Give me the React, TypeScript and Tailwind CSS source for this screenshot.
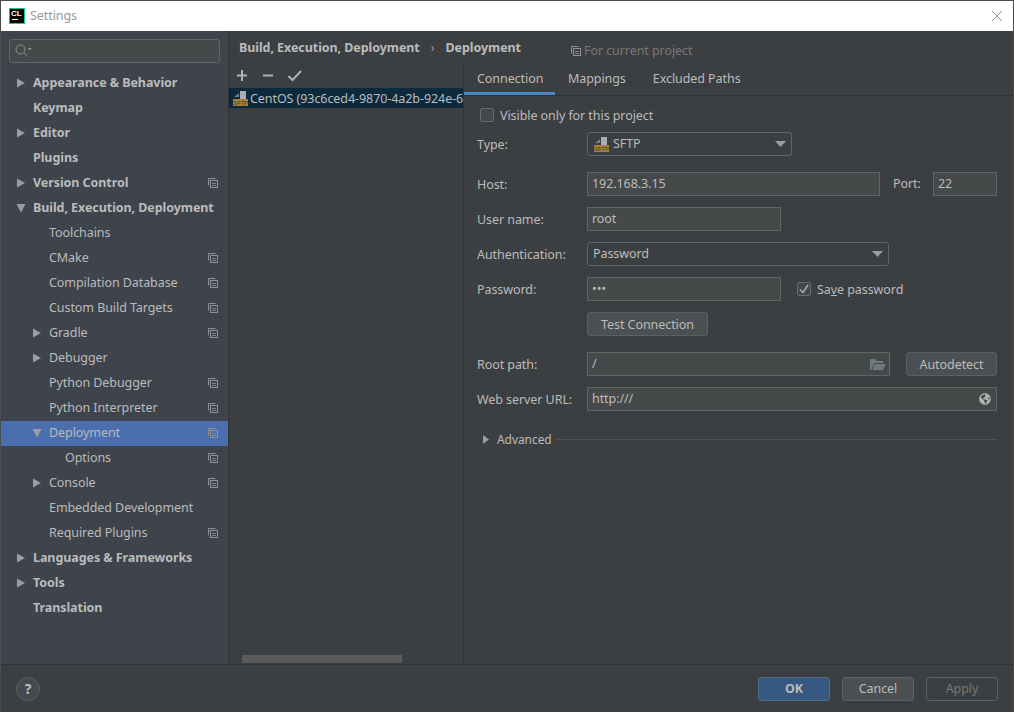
import { FaGlobeAmericas } from "react-icons/fa";

type NavItem = {
  label: string;
  level: 0 | 1 | 2;
  arrow?: "right" | "down";
  copy?: boolean;
  selected?: boolean;
};

const navItems: NavItem[] = [
  { label: "Appearance & Behavior", level: 0, arrow: "right" },
  { label: "Keymap", level: 0 },
  { label: "Editor", level: 0, arrow: "right" },
  { label: "Plugins", level: 0 },
  { label: "Version Control", level: 0, arrow: "right", copy: true },
  { label: "Build, Execution, Deployment", level: 0, arrow: "down" },
  { label: "Toolchains", level: 1 },
  { label: "CMake", level: 1, copy: true },
  { label: "Compilation Database", level: 1, copy: true },
  { label: "Custom Build Targets", level: 1, copy: true },
  { label: "Gradle", level: 1, arrow: "right", copy: true },
  { label: "Debugger", level: 1, arrow: "right" },
  { label: "Python Debugger", level: 1, copy: true },
  { label: "Python Interpreter", level: 1, copy: true },
  { label: "Deployment", level: 1, arrow: "down", copy: true, selected: true },
  { label: "Options", level: 2, copy: true },
  { label: "Console", level: 1, arrow: "right", copy: true },
  { label: "Embedded Development", level: 1 },
  { label: "Required Plugins", level: 1, copy: true },
  { label: "Languages & Frameworks", level: 0, arrow: "right" },
  { label: "Tools", level: 0, arrow: "right" },
  { label: "Translation", level: 0 },
];

function Arrow({ dir, className }: { dir: "right" | "down"; className?: string }) {
  return (
    <svg width="10" height="10" viewBox="0 0 10 10" className={className}>
      {dir === "right" ? (
        <polygon points="1,0.5 9,5 1,9.5" fill="#9a9da0" />
      ) : (
        <polygon points="0.5,1 9.5,1 5,9.5" fill="#9a9da0" />
      )}
    </svg>
  );
}

function CopyIcon() {
  return (
    <svg width="10" height="10" viewBox="0 0 10 10" fill="none" stroke="#8f9396">
      <path d="M7.5 0.5H0.5V7.5" />
      <rect x="2.5" y="2.5" width="7" height="7" />
      <path d="M4 5.5H8M4 7.5H8" strokeWidth="0.8" />
    </svg>
  );
}

function SftpIcon() {
  return (
    <svg width="16" height="16" viewBox="0 0 16 16" className="shrink-0">
      <polygon points="2,7 7,3 7,7" fill="#7d8185" />
      <rect x="8" y="1" width="6" height="8" fill="#a9adb0" />
      <rect x="1" y="9" width="15" height="7" fill="#a8822f" />
      <text x="8.5" y="15" textAnchor="middle" fontSize="6" fontFamily="Liberation Sans, sans-serif" fill="#3c3f41">
        SFTP
      </text>
    </svg>
  );
}

function Caret() {
  return (
    <svg width="11" height="6" viewBox="0 0 11 6">
      <polygon points="0,0 11,0 5.5,6" fill="#9a9da0" />
    </svg>
  );
}

function Field({ value, className, children }: { value: string; className: string; children?: React.ReactNode }) {
  return (
    <div className={`flex h-6 items-center justify-between border border-[#646464] bg-[#45494a] pl-[4px] pr-[3px] ${className}`}>
      <span className="pt-[1px]">{value}</span>
      {children}
    </div>
  );
}

function Combo({ className, children }: { className: string; children: React.ReactNode }) {
  return (
    <div className={`flex h-6 items-center justify-between rounded-[3px] border border-[#646464] bg-[#3c3f41] pl-[5px] pr-[5px] ${className}`}>
      <div className="flex items-center gap-1">{children}</div>
      <Caret />
    </div>
  );
}

function Label({ children, className = "w-[110px]" }: { children: React.ReactNode; className?: string }) {
  return <div className={`shrink-0 pt-[2px] ${className}`}>{children}</div>;
}

function Button({ children, className }: { children: React.ReactNode; className: string }) {
  return (
    <div className={`flex h-6 items-center justify-center rounded-[3px] border pt-[2px] ${className}`}>{children}</div>
  );
}

export default function App() {
  return (
    <div className="flex h-[712px] w-[1014px] flex-col overflow-hidden border-x border-t border-[#4b4b4b] bg-[#3c3f41] font-['Noto_Sans',sans-serif] text-[12.5px] leading-none tracking-[-0.07px] text-[#bbbbbb]">
      {/* title bar */}
      <div className="flex h-[30px] shrink-0 items-center bg-white pl-2 pr-[10px]">
        <div className="flex h-4 w-4 flex-col border border-[#10c98d] bg-black pl-px pt-px">
          <span className="font-['Liberation_Sans',sans-serif] text-[8px] font-bold leading-[8px] text-white">CL</span>
          <span className="ml-px mt-px h-px w-[6px] bg-white" />
        </div>
        <span className="ml-[5px] text-[#9a9a9a]">Settings</span>
        <svg width="12" height="12" viewBox="0 0 12 12" className="ml-auto" stroke="#8c8c8c">
          <path d="M1 1L11 11M11 1L1 11" />
        </svg>
      </div>

      <div className="flex min-h-0 flex-1">
        {/* sidebar */}
        <aside className="flex w-[228px] shrink-0 flex-col border-r border-[#323232] bg-[#3e434c]">
          <div className="mx-2 mt-2 flex h-6 items-center rounded-[3px] border border-[#646464] bg-[#45494a] pl-[5px]">
            <svg width="17" height="14" viewBox="0 0 17 14" fill="none" stroke="#8a8e91">
              <circle cx="5.5" cy="5.5" r="4.5" />
              <path d="M9 9L12.5 12.5" />
              <polygon points="12.5,4 17,4 14.75,6.5" fill="#8a8e91" stroke="none" />
            </svg>
          </div>
          <nav className="mt-2 flex flex-col">
            {navItems.map((item) => (
              <div
                key={item.label}
                className={`relative flex h-[25px] shrink-0 items-center pr-[10px] ${item.selected ? "bg-[#4b6eaf]" : ""} ${item.level === 0 ? "pl-8 font-bold" : item.level === 1 ? "pl-12" : "pl-16"}`}
              >
                {item.arrow && (
                  <Arrow
                    dir={item.arrow}
                    className={`absolute top-[7px] ${item.level === 0 ? "left-[15px]" : "left-[31px]"}`}
                  />
                )}
                <span className="pb-[1px]">{item.label}</span>
                {item.copy && (
                  <span className="ml-auto pb-[2px]">
                    <CopyIcon />
                  </span>
                )}
              </div>
            ))}
          </nav>
        </aside>

        {/* main */}
        <main className="flex min-w-0 flex-1 flex-col">
          <div className="flex h-[32px] shrink-0 items-center pl-[10px] pt-[3px]">
            <span className="font-bold">Build, Execution, Deployment</span>
            <span className="mx-[11px] text-[#9a9a9a]">›</span>
            <span className="font-bold">Deployment</span>
            <span className="ml-[50px] flex items-center gap-[3px] pt-[5px] text-[#787878]">
              <CopyIcon />
              For current project
            </span>
          </div>

          <div className="flex min-h-0 flex-1">
            {/* server list */}
            <div className="relative flex w-[235px] shrink-0 flex-col border-r border-[#323232]">
              <div className="flex h-[25px] shrink-0 items-center gap-[13px] pl-[7px]">
                <svg width="13" height="13" viewBox="0 0 13 13" stroke="#afb1b3" strokeWidth="2">
                  <path d="M6 1V12M1 6.5H11" />
                </svg>
                <svg width="13" height="13" viewBox="0 0 13 13" stroke="#afb1b3" strokeWidth="2">
                  <path d="M1 6.5H11" />
                </svg>
                <svg width="14" height="13" viewBox="0 0 14 13" fill="none" stroke="#afb1b3" strokeWidth="2">
                  <path d="M0.5 7L4.5 11L13 2" />
                </svg>
              </div>
              <div className="flex h-5 items-center gap-[2px] overflow-hidden whitespace-nowrap bg-[#0d293e] pl-[3px]">
                <SftpIcon />
                <span className="pt-[2px]">CentOS (93c6ced4-9870-4a2b-924e-6</span>
              </div>
              <div className="absolute bottom-[1px] left-[13px] h-2 w-40 bg-[#5a5a5a]" />
            </div>

            {/* tabs and form */}
            <div className="flex min-w-0 flex-1 flex-col">
              <div className="flex h-[33px] shrink-0 items-stretch border-b border-[#323232]">
                <div className="flex w-[91px] items-center border-b-[3px] border-[#4a88c7] pl-[13px] pt-1">Connection</div>
                <div className="flex items-center pl-[13px] pt-[1px]">Mappings</div>
                <div className="flex items-center pl-[27px] pt-[1px]">Excluded Paths</div>
              </div>

              <div className="flex flex-col pl-[13px] pr-[16px]">
                <div className="mt-[11px] flex h-[16px] items-center pl-[3px]">
                  <span className="h-[14px] w-[14px] rounded-[2px] border border-[#6b6b6b] bg-[#43494a]" />
                  <span className="ml-[6px] pt-[2px]">Visible only for this project</span>
                </div>

                <div className="mt-[9px] flex items-center">
                  <Label>Type:</Label>
                  <Combo className="w-[205px]">
                    <SftpIcon />
                    <span className="pt-[1px]">SFTP</span>
                  </Combo>
                </div>

                <div className="mt-4 flex items-center">
                  <Label>Host:</Label>
                  <Field value="192.168.3.15" className="w-[293px]" />
                  <span className="ml-[13px] w-[40px]">Port:</span>
                  <Field value="22" className="w-[64px]" />
                </div>

                <div className="mt-[11px] flex items-center">
                  <Label>User name:</Label>
                  <Field value="root" className="w-[194px]" />
                </div>

                <div className="mt-[11px] flex items-center">
                  <Label>Authentication:</Label>
                  <Combo className="w-[302px]">
                    <span>Password</span>
                  </Combo>
                </div>

                <div className="mt-[11px] flex items-center">
                  <Label>Password:</Label>
                  <Field value="•••" className="w-[194px]" />
                  <span className="ml-4 flex h-[14px] w-[14px] items-center justify-center rounded-[2px] border border-[#6b6b6b] bg-[#43494a]">
                    <svg width="10" height="10" viewBox="0 0 10 10" fill="none" stroke="#a7a7a7" strokeWidth="1.6">
                      <path d="M1 5.5L4 8.5L9 1" />
                    </svg>
                  </span>
                  <span className="ml-[6px] pt-[2px]">
                    Sa<span className="underline">v</span>e password
                  </span>
                </div>

                <div className="mt-[11px] flex pl-[110px]">
                  <Button className="w-[121px] border-[#5e6060] bg-[#4c5052]">Test Connection</Button>
                </div>

                <div className="mt-4 flex items-center">
                  <Label>Root path:</Label>
                  <Field value="/" className="w-[303px]">
                    <svg width="16" height="12" viewBox="0 0 16 12">
                      <path d="M0 12V1H5L6.5 3H13V5H4L1.5 12Z" fill="#6e7a80" />
                      <path d="M4.5 6H16L13 12H2.5Z" fill="#6e7a80" />
                    </svg>
                  </Field>
                  <Button className="ml-4 w-[91px] border-[#5e6060] bg-[#4c5052]">Autodetect</Button>
                </div>

                <div className="mt-[11px] flex items-center">
                  <Label>Web server URL:</Label>
                  <Field value="http:///" className="w-[410px]">
                    <FaGlobeAmericas className="mr-[2px] text-[12px] text-[#afb1b3]" />
                  </Field>
                </div>

                <div className="mt-[21px] flex h-[15px] items-center pl-[6px]">
                  <svg width="6" height="9" viewBox="0 0 6 9">
                    <polygon points="0,0 6,4.5 0,9" fill="#9a9da0" />
                  </svg>
                  <span className="ml-2 text-[12px]">Advanced</span>
                  <span className="ml-1 h-px flex-1 bg-[#515151]" />
                </div>
              </div>
            </div>
          </div>
        </main>
      </div>

      {/* footer */}
      <footer className="flex h-[48px] shrink-0 items-center justify-between border-t border-[#323232] pl-[15px] pr-[15px]">
        <div className="flex h-6 w-6 items-center justify-center rounded-full border border-[#5e6060] bg-[#46494b] text-[14px] font-bold">
          ?
        </div>
        <div className="flex gap-3">
          <Button className="w-[72px] border-[#4c708c] bg-[#365880] font-bold">OK</Button>
          <Button className="w-[72px] border-[#5e6060] bg-[#4c5052]">Cancel</Button>
          <Button className="w-[72px] border-[#5e6060] text-[#777777]">Apply</Button>
        </div>
      </footer>
    </div>
  );
}
